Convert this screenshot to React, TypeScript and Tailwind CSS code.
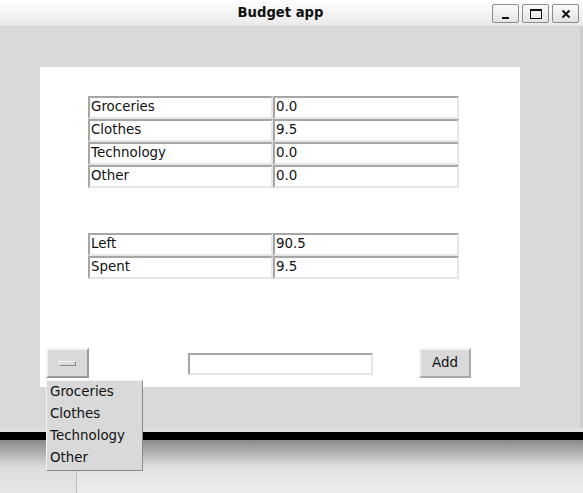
import React from "react";

const font = { fontFamily: '"DejaVu Sans", "Liberation Sans", sans-serif' };

function Cell({ text }: { text: string }) {
  return (
    <div className="h-[23px] border-2 border-t-[#a6a6a6] border-l-[#a6a6a6] border-b-[#e6e6e6] border-r-[#e6e6e6] bg-white pl-[1px] text-[13.4px] leading-[17px] text-[#111]">
      {text}
    </div>
  );
}

function Table({ rows }: { rows: [string, string][] }) {
  return (
    <div className="grid w-[371px] grid-cols-[185px_186px]">
      {rows.map(([a, b]) => (
        <React.Fragment key={a}>
          <Cell text={a} />
          <Cell text={b} />
        </React.Fragment>
      ))}
    </div>
  );
}

function WinBtn({ children }: { children: React.ReactNode }) {
  return (
    <div className="flex h-[19px] w-[27px] items-center justify-center rounded-[2px] border border-[#8c8c8c] bg-gradient-to-b from-[#fbfbfb] to-[#e2e2e2]">
      {children}
    </div>
  );
}

export default function App() {
  return (
    <div className="relative h-[493px] w-[583px] overflow-hidden bg-[#d9d9d9]" style={font}>
      {/* title bar */}
      <div className="relative flex h-[27px] items-center justify-center border-b border-[#d0d0d0] bg-gradient-to-b from-white to-[#e9e9e9] pr-[22px]">
        <span className="text-[13.2px] font-bold text-[#111]">Budget app</span>
        <div className="absolute right-[4px] top-[4px] flex gap-[3px]">
          <WinBtn>
            <svg width="12" height="12" viewBox="0 0 12 12">
              <rect x="2" y="9" width="7" height="2" fill="#111" />
            </svg>
          </WinBtn>
          <WinBtn>
            <svg width="14" height="12" viewBox="0 0 14 12">
              <rect x="1.5" y="1.5" width="11" height="9" fill="none" stroke="#111" strokeWidth="1" />
              <rect x="1" y="1" width="12" height="2" fill="#111" />
            </svg>
          </WinBtn>
          <WinBtn>
            <svg width="12" height="12" viewBox="0 0 12 12">
              <path d="M2.5 2.5 L9.5 9.5 M9.5 2.5 L2.5 9.5" stroke="#111" strokeWidth="2" />
            </svg>
          </WinBtn>
        </div>
      </div>

      {/* window body */}
      <div className="flex h-[401px]">
        <div className="w-[580px] bg-[#d9d9d9] pl-[40px] pt-[40px]">
          <div className="h-[320px] w-[480px] bg-white pt-[29px]">
            <div className="ml-[48px]">
              <Table
                rows={[
                  ["Groceries", "0.0"],
                  ["Clothes", "9.5"],
                  ["Technology", "0.0"],
                  ["Other", "0.0"],
                ]}
              />
            </div>
            <div className="ml-[48px] mt-[45px]">
              <Table
                rows={[
                  ["Left", "90.5"],
                  ["Spent", "9.5"],
                ]}
              />
            </div>
            <div className="mt-[69px] flex items-start pl-[6px]">
              <div className="flex h-[30px] w-[43px] items-center justify-center border-2 border-t-[#f4f4f4] border-l-[#f4f4f4] border-b-[#9a9a9a] border-r-[#9a9a9a] bg-[#d9d9d9]">
                <div className="h-[5px] w-[17px] border border-t-[#f4f4f4] border-l-[#f4f4f4] border-b-[#8a8a8a] border-r-[#8a8a8a] bg-[#d9d9d9]" />
              </div>
              <div className="ml-[99px] mt-[5px] h-[22px] w-[185px] border-2 border-t-[#a6a6a6] border-l-[#a6a6a6] border-b-[#e6e6e6] border-r-[#e6e6e6] bg-white" />
              <div className="ml-[46px] flex h-[30px] w-[52px] items-center justify-center border-2 border-t-[#f4f4f4] border-l-[#f4f4f4] border-b-[#a8a8a8] border-r-[#a8a8a8] bg-[#d9d9d9] text-[13.4px] text-[#111]">
                Add
              </div>
            </div>
          </div>
        </div>
        <div className="w-[3px] bg-[#cdcdcd]" />
      </div>

      {/* desktop below */}
      <div className="h-[4px] bg-[#dedede]" />
      <div className="h-[8px] bg-black" />
      <div className="flex h-[53px]">
        <div className="w-[77px] border-r border-[#bdbdbd] bg-gradient-to-b from-[#8a8a8a] via-[#dcdcdc] to-[#e6e6e6]" />
        <div className="flex-1 bg-gradient-to-b from-[#8a8a8a] via-[#e0e0e0] to-[#eeeeee]" />
      </div>

      {/* dropdown menu */}
      <div className="absolute left-[46px] top-[380px] w-[97px] border border-t-[#f4f4f4] border-l-[#f4f4f4] border-b-[#8a8a8a] border-r-[#8a8a8a] bg-[#d9d9d9] pb-[1px] pl-[3px] text-[13.4px] text-[#111]">
        {["Groceries", "Clothes", "Technology", "Other"].map((t) => (
          <div key={t} className="h-[22px] leading-[21px]">
            {t}
          </div>
        ))}
      </div>
    </div>
  );
}
